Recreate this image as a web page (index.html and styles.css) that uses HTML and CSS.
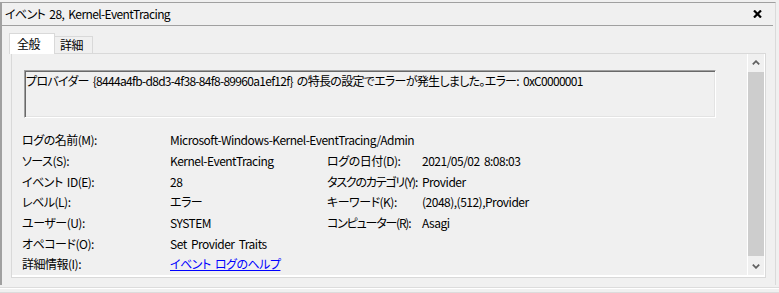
FILE: index.html
```html
<!DOCTYPE html>
<html lang="ja">
<head>
<meta charset="utf-8">
<link rel="stylesheet" href="styles.css">
</head>
<body>
<div class="frame">
  <div class="titlebar">
    <span class="title">イベント 28, Kernel-EventTracing</span>
    <svg class="close" width="9" height="8" viewBox="0 0 9 8"><path d="M1 0.5 L8 7.5 M8 0.5 L1 7.5" stroke="#000" stroke-width="2.2" fill="none"/></svg>
  </div>
  <div class="tabs">
    <div class="tab active">全般</div>
    <div class="tab">詳細</div>
  </div>
  <div class="panel">
    <div class="content">
      <div class="message">プロバイダー {8444a4fb-d8d3-4f38-84f8-89960a1ef12f} の特長の設定でエラーが発生しました。エラー: 0xC0000001</div>
      <div class="props">
        <div class="label">ログの名前(M):</div>
        <div class="value wide">Microsoft-Windows-Kernel-EventTracing/Admin</div>
        <div class="label">ソース(S):</div>
        <div class="value">Kernel-EventTracing</div>
        <div class="label">ログの日付(D):</div>
        <div class="value">2021/05/02 8:08:03</div>
        <div class="label">イベント ID(E):</div>
        <div class="value">28</div>
        <div class="label tight">タスクのカテゴリ(Y):</div>
        <div class="value">Provider</div>
        <div class="label">レベル(L):</div>
        <div class="value">エラー</div>
        <div class="label">キーワード(K):</div>
        <div class="value">(2048),(512),Provider</div>
        <div class="label">ユーザー(U):</div>
        <div class="value">SYSTEM</div>
        <div class="label tight">コンピューター(R):</div>
        <div class="value">Asagi</div>
        <div class="label">オペコード(O):</div>
        <div class="value wide">Set Provider Traits</div>
        <div class="label">詳細情報(I):</div>
        <div class="value wide"><a class="link" href="#">イベント ログのヘルプ</a></div>
      </div>
    </div>
    <div class="scrollbar">
      <div class="arrow"><svg width="8" height="5" viewBox="0 0 8 5"><path d="M0.8 4.3 L4 1.2 L7.2 4.3" stroke="#606060" stroke-width="1.8" fill="none"/></svg></div>
      <div class="thumb"></div>
      <div class="arrow"><svg width="8" height="5" viewBox="0 0 8 5"><path d="M0.8 0.7 L4 3.8 L7.2 0.7" stroke="#606060" stroke-width="1.8" fill="none"/></svg></div>
    </div>
  </div>
</div>
<div class="footer"></div>
</body>
</html>
```

FILE: styles.css
```css
* { box-sizing: border-box; }
html, body { margin: 0; padding: 0; }
body {
  width: 779px;
  height: 293px;
  overflow: hidden;
  background: #f0f0f0;
  font-family: "Noto Sans CJK JP", "Liberation Sans", sans-serif;
  font-size: 12px;
  color: #000;
  font-feature-settings: "palt";
  letter-spacing: -0.5px;
  word-spacing: 2px;
  line-height: 16px;
}
.frame {
  margin-top: 2px;
  width: 776px;
  height: 283px;
  border-top: 1px solid #a0a0a0;
  border-left: 2px solid #a0a0a0;
  border-right: 1px solid #dadada;
}
.titlebar {
  display: flex;
  align-items: center;
  height: 23px;
  padding-left: 3px;
  margin-right: 2px;
  border-bottom: 1px solid #a0a0a0;
}
.title { letter-spacing: -0.6px; }
.close { margin-left: auto; margin-right: 11px; }
.tabs {
  display: flex;
  align-items: flex-end;
  height: 27px;
  padding-left: 7px;
}
.tab {
  height: 17px;
  width: 38px;
  padding-left: 5px;
  border-top: 1px solid #d9d9d9;
  border-right: 1px solid #d9d9d9;
  background: #f0f0f0;
  display: flex;
  align-items: center;
}
.tab.active {
  width: 46px;
  height: 21px;
  margin-bottom: -1px;
  padding-left: 7px;
  background: #fff;
  border-left: 1px solid #d9d9d9;
  position: relative;
  z-index: 1;
}
.panel {
  margin-left: 9px;
  width: 755px;
  height: 225px;
  border: 1px solid #d9d9d9;
  background: #fff;
  padding: 0 1px 2px 0;
  display: flex;
}
.content {
  flex: 1;
  background: #f0f0f0;
  padding: 16px 0 0 12px;
}
.message {
  width: 692px;
  height: 48px;
  padding: 2px 1px;
  border-top: 1px solid #a0a0a0;
  border-left: 1px solid #a0a0a0;
  border-right: 1px solid #fff;
  border-bottom: 1px solid #fff;
  box-shadow: inset 1px 1px 0 #696969, inset -1px -1px 0 #e3e3e3;
  white-space: nowrap;
  letter-spacing: -0.7px;
}
.props {
  margin-top: 12px;
  margin-left: -2px;
  display: grid;
  grid-template-columns: 148px 157px 95px 1fr;
  grid-auto-rows: 20.67px;
  align-items: center;
  white-space: nowrap;
}
.label.tight { letter-spacing: -1.2px; }
.value.wide { grid-column: 2 / span 3; }
.link { color: #0000ff; text-decoration: underline; }
.scrollbar {
  width: 17px;
  border-left: 1px solid #fff;
  background: #f0f0f0;
  display: flex;
  flex-direction: column;
}
.arrow {
  height: 17px;
  display: flex;
  align-items: center;
  justify-content: center;
}
.thumb {
  flex: 1;
  background: #cdcdcd;
  margin: 1px 0 2px;
}
.footer {
  margin-top: 2px;
  height: 6px;
  border-top: 1px solid #dcdcdc;
  border-bottom: 1px solid #dcdcdc;
  box-shadow: inset 0 1px 0 #fff;
}
```
